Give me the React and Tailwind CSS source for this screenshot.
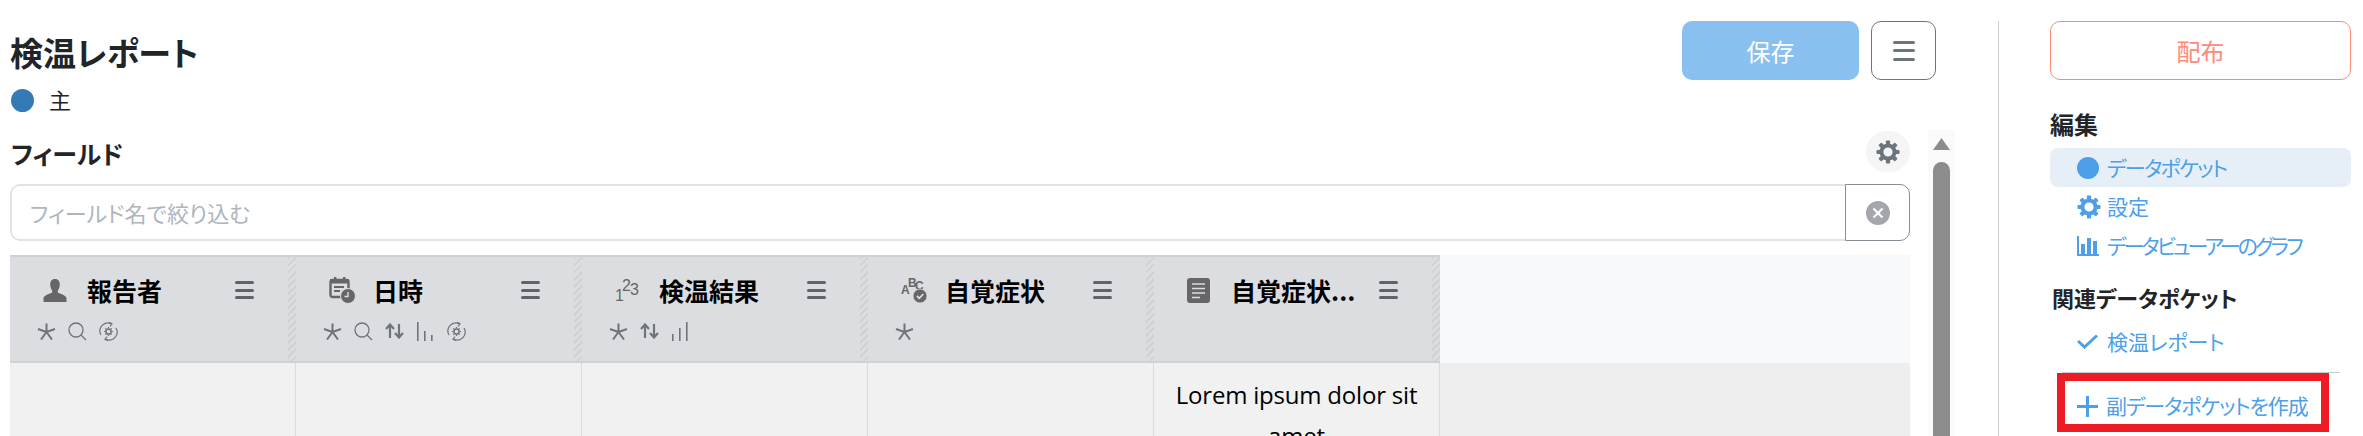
const FONT = "font-['Noto_Sans_CJK_JP','Noto_Sans',sans-serif]";

function Menu({ className = "" }) {
  return (
    <span className={`flex flex-col justify-between ${className}`}>
      <i className="block h-[3px] rounded-full bg-current" />
      <i className="block h-[3px] rounded-full bg-current" />
      <i className="block h-[3px] rounded-full bg-current" />
    </span>
  );
}

function Gear({ className = "" }) {
  const teeth = [0, 45, 90, 135, 180, 225, 270, 315];
  return (
    <svg viewBox="0 0 24 24" className={className} fill="currentColor">
      {teeth.map((a) => (
        <rect key={a} x="9.9" y="0.5" width="4.2" height="6" rx="0.8" transform={`rotate(${a} 12 12)`} />
      ))}
      <circle cx="12" cy="12" r="6.6" fill="none" stroke="currentColor" strokeWidth="4" />
    </svg>
  );
}

const Star = () => (
  <svg viewBox="0 0 19 17" className="w-[19px] h-[17px]" stroke="#6c757d" strokeWidth="2" fill="none">
    <path d="M9.5 0.5V9M9.5 9L1 6M9.5 9L18 6M9.5 9L4 16.5M9.5 9L15 16.5" />
  </svg>
);
const Search = () => (
  <svg viewBox="0 0 19 19" className="w-[19px] h-[19px]" stroke="#6c757d" strokeWidth="1.3" fill="none">
    <circle cx="8" cy="8" r="7" />
    <path d="M13 13L18 18" />
  </svg>
);
const Sort = () => (
  <svg viewBox="0 0 19 16" className="w-[19px] h-[16px]" stroke="#6c757d" strokeWidth="2.2" fill="none">
    <path d="M5 15V2M1 6L5 1.5L9 6M14 1V14M10 10L14 14.5L18 10" />
  </svg>
);
const Bars = ({ flip }) => (
  <svg viewBox="0 0 19 19" className="w-[19px] h-[19px]" fill="#6c757d">
    {flip ? (
      <>
        <rect x="1" y="12" width="1.6" height="7" />
        <rect x="8" y="6" width="1.6" height="13" />
        <rect x="15" y="0" width="1.6" height="19" />
      </>
    ) : (
      <>
        <rect x="1" y="0" width="1.6" height="19" />
        <rect x="8" y="9" width="1.6" height="10" />
        <rect x="15" y="13" width="1.6" height="6" />
      </>
    )}
  </svg>
);
const Sync = () => (
  <svg viewBox="0 0 19 19" className="w-[19px] h-[19px]" stroke="#6c757d" fill="none">
    <path d="M2 13A8 8 0 0 1 12 1.6M17 6A8 8 0 0 1 7 17.4" strokeWidth="1.2" />
    <path d="M10 0.3L13 1.8L11 4.3M9 18.7L6 17.2L8 14.7" strokeWidth="1.2" />
    <circle cx="9.5" cy="9.5" r="2.6" strokeWidth="1.5" />
    <path d="M9.5 5V6.6M9.5 12.4V14M5 9.5H6.6M12.4 9.5H14M6.3 6.3L7.4 7.4M11.6 11.6L12.7 12.7M12.7 6.3L11.6 7.4M7.4 11.6L6.3 12.7" strokeWidth="1.2" />
  </svg>
);

const Person = () => (
  <svg viewBox="0 0 24 23" className="w-[24px] h-[23px]" fill="#666">
    <path d="M12 0C8.5 0 7.2 2.6 7.2 5.5C7.2 8 8 10 9.2 11.4V13.6C7 15 1.5 15.8 0.5 19V23H23.5V19C22.5 15.8 17 15 14.8 13.6V11.4C16 10 16.8 8 16.8 5.5C16.8 2.6 15.5 0 12 0Z" />
  </svg>
);
const DateIcon = () => (
  <svg viewBox="0 0 27 27" className="w-[27px] h-[27px]">
    <rect x="1.5" y="3" width="18" height="17" rx="2" fill="none" stroke="#666" strokeWidth="2.4" />
    <rect x="1" y="2" width="19" height="4.5" fill="#666" />
    <rect x="5" y="0" width="2.4" height="4" fill="#666" />
    <rect x="14" y="0" width="2.4" height="4" fill="#666" />
    <path d="M5 10H15M5 14H11" stroke="#666" strokeWidth="1.8" />
    <circle cx="19" cy="19" r="7.5" fill="#666" stroke="#dcdde0" strokeWidth="1" />
    <path d="M19 15V19.5H15.5" stroke="#dcdde0" strokeWidth="1.4" fill="none" />
  </svg>
);
const NumIcon = () => (
  <svg viewBox="0 0 25 24" className="w-[25px] h-[24px]" fill="#666" fontFamily="Liberation Sans, sans-serif">
    <text x="0" y="23" fontSize="16">1</text>
    <text x="7" y="13" fontSize="16">2</text>
    <text x="15" y="17" fontSize="16">3</text>
  </svg>
);
const AbcIcon = () => (
  <svg viewBox="0 0 26 26" className="w-[26px] h-[26px]" fill="#666" fontFamily="Liberation Sans, sans-serif" fontWeight="700">
    <text x="0" y="17" fontSize="12">A</text>
    <text x="7" y="10" fontSize="12">B</text>
    <text x="14" y="13" fontSize="12">C</text>
    <circle cx="19" cy="19" r="7" stroke="#dcdde0" strokeWidth="0.8" />
    <path d="M16 19L18.3 21.3L22.3 17" stroke="#dcdde0" strokeWidth="1.8" fill="none" />
  </svg>
);
const DocIcon = () => (
  <svg viewBox="0 0 23 25" className="w-[23px] h-[25px]">
    <rect width="23" height="25" rx="3" fill="#666" />
    <path d="M5 6H18M5 10.5H18M5 15H18M5 19.5H13" stroke="#dcdde0" strokeWidth="1.4" />
  </svg>
);

const columns = [
  { icon: <Person />, label: "報告者", tools: [<Star />, <Search />, <Sync />] },
  { icon: <DateIcon />, label: "日時", tools: [<Star />, <Search />, <Sort />, <Bars />, <Sync />] },
  { icon: <NumIcon />, label: "検温結果", tools: [<Star />, <Sort />, <Bars flip />] },
  { icon: <AbcIcon />, label: "自覚症状", tools: [<Star />] },
  { icon: <DocIcon />, label: "自覚症状...", tools: [], text: "Lorem ipsum dolor sit amet" },
];

function HeaderCell({ col }) {
  return (
    <div className="relative w-[286px] h-full shrink-0 bg-[#dcdde0] pt-[19px]">
      <div className="flex items-center h-[28px] pl-[33px]">
        <span className="w-[44px] shrink-0 flex">{col.icon}</span>
        <span className="w-[148px] shrink-0 text-[25px] leading-[28px] font-bold text-black whitespace-nowrap">
          {col.label}
        </span>
        <Menu className="w-[19px] h-[18px] text-[#5f6367]" />
      </div>
      <div className="flex items-center gap-[12px] h-[20px] mt-[17px] pl-[27px]">
        {col.tools.map((t, i) => (
          <span key={i} className="flex">{t}</span>
        ))}
      </div>
      <div className="absolute right-0 top-0 bottom-0 w-[8px] bg-[repeating-linear-gradient(135deg,#d0d1d4_0,#d0d1d4_2px,#dcdde0_2px,#dcdde0_5px)]" />
    </div>
  );
}

function NavRow({ icon, children, active, className = "" }) {
  return (
    <div className={`flex items-center h-[39px] pl-[27px] rounded-[8px] text-[21px] text-[#4c9fe8] [font-feature-settings:'palt'] whitespace-nowrap ${active ? "bg-[#e6eff7]" : ""} ${className}`}>
      <span className="w-[30px] shrink-0 flex">{icon}</span>
      {children}
    </div>
  );
}

export default function App() {
  return (
    <div className={`flex w-[2363px] h-[436px] overflow-hidden bg-white text-[#212529] ${FONT}`}>
      <div className="w-[1998px] shrink-0 pl-[10px]">
        <div className="flex justify-between h-[130px] pt-[21px] pr-[62px]">
          <div>
            <h1 className="text-[33px] leading-[62px] font-bold text-[#212529] [font-feature-settings:'palt']">検温レポート</h1>
            <div className="flex items-center mt-[5px] h-[24px]">
              <span className="w-[23px] h-[23px] ml-[1px] rounded-full bg-[#337ab7]" />
              <span className="ml-[15px] pb-[3px] text-[22px] leading-[24px]">主</span>
            </div>
          </div>
          <div className="flex gap-[12px]">
            <button className="w-[177px] h-[59px] rounded-[10px] bg-[#8ac0f0] text-white text-[24px]">保存</button>
            <button className="w-[65px] h-[59px] rounded-[10px] border border-[#6c757d] bg-white flex items-center justify-center">
              <Menu className="w-[22px] h-[20px] text-[#6c757d]" />
            </button>
          </div>
        </div>

        <div className="flex h-[306px] overflow-hidden">
          <div className="w-[1900px] shrink-0">
            <div className="flex items-center justify-between h-[54px]">
              <h2 className="text-[25px] leading-[46px] font-bold ml-[1px] mb-[8px] [font-feature-settings:'palt']">フィールド</h2>
              <span className="w-[44px] h-[41px] mb-[11px] rounded-full bg-[#f5f5f5] flex items-center justify-center text-[#6c757d]">
                <Gear className="w-[26px] h-[24px]" />
              </span>
            </div>
            <div className="flex h-[57px] mb-[14px]">
              <div className="flex-1 flex items-center pl-[18px] rounded-l-[10px] border-2 border-r-0 border-[#e1e3e6] text-[22px] text-[#adb5bd] [font-feature-settings:'palt']">
                フィールド名で絞り込む
              </div>
              <div className="w-[65px] flex items-center justify-center rounded-r-[10px] border border-[#868e96]">
                <svg viewBox="0 0 24 24" className="w-[24px] h-[24px]">
                  <circle cx="12" cy="12" r="12" fill="#a3a6ab" />
                  <path d="M7.5 7.5L16.5 16.5M16.5 7.5L7.5 16.5" stroke="#fff" strokeWidth="2.2" />
                </svg>
              </div>
            </div>

            <div className="flex h-[108px] bg-[#f8f9fa]">
              <div className="flex h-full border-t-2 border-b-2 border-[#d0d1d4]">
                {columns.map((c) => (
                  <HeaderCell key={c.label} col={c} />
                ))}
              </div>
            </div>
            <div className="flex h-[200px] bg-[#eeeeee]">
              {columns.map((c) => (
                <div key={c.label} className="w-[286px] shrink-0 bg-[#f1f1f1] border-r border-[#dcdcdc] px-[16px] pt-[11px] text-center text-[24px] tracking-[-0.2px] leading-[41px] text-black font-['Open_Sans',sans-serif]">
                  {c.text}
                </div>
              ))}
            </div>
          </div>
          <div className="w-[27px] ml-[18px] shrink-0 bg-[#fafafa] flex flex-col items-center">
            <svg viewBox="0 0 17 12" className="w-[17px] h-[12px] mt-[8px]">
              <path d="M8.5 0L17 12H0Z" fill="#8c8c8c" />
            </svg>
            <div className="w-[17px] flex-1 mt-[12px] rounded-t-full bg-[#8c8c8c]" />
          </div>
        </div>
      </div>

      <div className="w-[353px] shrink-0 mt-[21px] border-l border-[#cccccc] pl-[51px]">
        <button className="w-[301px] h-[59px] rounded-[10px] border border-[#ff8a75] text-[#ff8a75] text-[24px] bg-white">配布</button>
        <h3 className="mt-[29px] text-[24px] leading-[30px] font-bold">編集</h3>
        <div className="mt-[9px] w-[301px]">
          <NavRow active icon={<span className="w-[22px] h-[22px] rounded-full bg-[#4c9fe8]" />}>
            <span className="tracking-[-1.7px]">データポケット</span>
          </NavRow>
          <NavRow icon={<Gear className="w-[24px] h-[24px]" />}>設定</NavRow>
          <NavRow icon={
            <svg viewBox="0 0 22 20" className="w-[22px] h-[20px]" fill="#4c9fe8">
              <rect x="0" y="0" width="2" height="20" />
              <rect x="0" y="18" width="22" height="2" />
              <rect x="4" y="8" width="4" height="10" />
              <rect x="10" y="2" width="4" height="16" />
              <rect x="16" y="5" width="4" height="13" />
            </svg>
          }>
            <span className="tracking-[-3px]">データビューアーのグラフ</span>
          </NavRow>
        </div>
        <h3 className="mt-[16px] ml-[2px] text-[22px] leading-[32px] font-bold whitespace-nowrap [font-feature-settings:'palt']">関連データポケット</h3>
        <NavRow className="mt-[9px]" icon={
          <svg viewBox="0 0 21 15" className="w-[21px] h-[15px]" fill="none" stroke="#4c9fe8" strokeWidth="3">
            <path d="M1 7L7.5 13L20 1.5" />
          </svg>
        }>検温レポート</NavRow>
        <div className="mt-[11px] ml-[12px] w-[278px] h-px bg-[#cccccc]" />
        <div className="ml-[7px] w-[272px] h-[59px] border-8 border-[#ed1c24] flex items-center pl-[12px] pt-[7px] text-[21px] text-[#4c9fe8] whitespace-nowrap [font-feature-settings:'palt']">
          <svg viewBox="0 0 21 21" className="w-[21px] h-[21px] mr-[8px] shrink-0" stroke="#4c9fe8" strokeWidth="3">
            <path d="M10.5 0V21M0 10.5H21" />
          </svg>
          <span className="tracking-[-1.1px]">副データポケットを作成</span>
        </div>
      </div>
    </div>
  );
}
